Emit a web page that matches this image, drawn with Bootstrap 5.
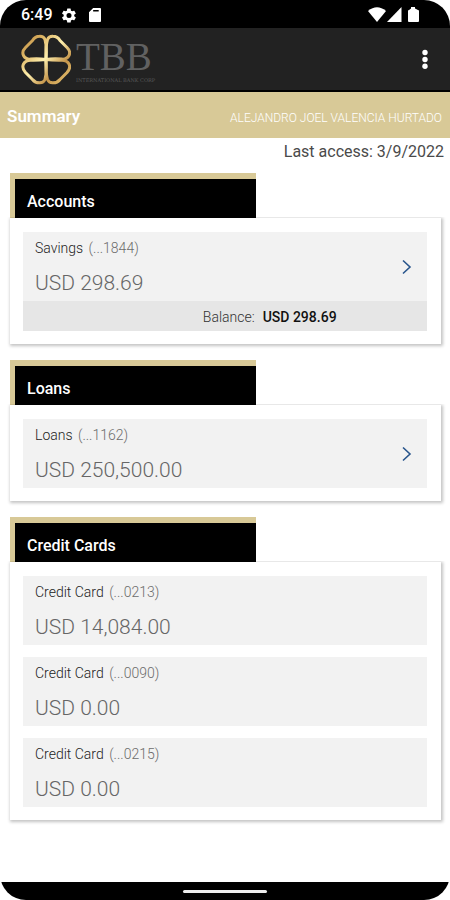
<!DOCTYPE html>
<html lang="en">
<head>
<meta charset="utf-8">
<meta name="viewport" content="width=device-width, initial-scale=1">
<title>TBB – Summary</title>
<link href="https://cdn.jsdelivr.net/npm/bootstrap@5.3.0/dist/css/bootstrap.min.css" rel="stylesheet">
<style>
  body { font-family: Roboto, "Liberation Sans", sans-serif; background: #fff; color: #333; }
  svg { display: block; }
  .phone { border-radius: 26px; }
  .status-bar { height: 28px; padding: 2px 31px 0 21px; font-size: 16px; line-height: 26px; font-weight: 500; }
  .status-bar .left-icons { gap: 9px; }
  .app-bar { height: 64px; background: #222; border-bottom: 2px solid #000; padding: 0 14px 0 21px; }
  .brand-text { padding: 2px 0 0 5px; }
  .brand-name { font: 39px/40px "Liberation Serif", serif; color: #616161; }
  .brand-sub { font: 5px/6px "DejaVu Serif", serif; color: #585858; }
  .title-bar { height: 46px; background: #d8c997; padding: 2px 8px 0 7px; }
  .title-bar h1 { font-size: 17px; line-height: 24px; font-weight: 600; }
  .holder { font-size: 12px; line-height: 20px; padding-top: 4px; font-weight: 300; }
  .last-access { font-size: 16px; line-height: 24px; padding: 2px 6px 0; color: #4a4a4a; }
  main { padding: 9px 9px 16px 10px; gap: 16px; }
  .tab-title { width: 57%; height: 45px; border-top: 6px solid #d8c997; border-left: 5px solid #d8c997;
    background: #000; color: #fff; font-size: 16px; line-height: 20px; font-weight: 500; padding: 13px 12px 0; }
  .panel { background: #fff; padding: 14px 14px 13px 13px; gap: 12px;
    box-shadow: 1px 1px 3px 1px rgba(0,0,0,.24); clip-path: inset(-1px -5px -5px -5px); }
  .product-main { background: #f2f2f2; height: 69px; padding: 6px 13px 0 12px; }
  .product-name { font-size: 14px; line-height: 20px; color: #222; font-weight: 300; }
  .product-name span { color: #6c6c6c; margin-left: 2px; }
  .amount { font-size: 21px; line-height: 28px; margin-top: 11px; color: #666; font-weight: 300; }
  .open-link { margin-bottom: 6px; }
  .balance { background: #e6e6e6; height: 30px; font-size: 14px; line-height: 32px; color: #333; font-weight: 300; }
  .balance strong { color: #111; font-weight: 500; }
  .nav-bar { height: 18px; }
  .home-pill { width: 84px; height: 3px; background: #eee; }
</style>
<script src="https://cdn.jsdelivr.net/npm/bootstrap@5.3.0/dist/js/bootstrap.bundle.min.js" defer></script>
</head>
<body>
<div class="phone min-vh-100 d-flex flex-column overflow-hidden bg-white">

  <div class="status-bar bg-black text-white d-flex justify-content-between">
    <div class="left-icons d-flex align-items-center">
      <span>6:49</span>
      <svg width="14" height="15" viewBox="2 2 20 20" fill="#fff" aria-hidden="true"><path d="M19.4 13a7.500 7.500 0 0 0 0-2l2.100-1.600a.5.5 0 0 0 .1-.6l-2-3.500a.5.5 0 0 0-.6-.2l-2.500 1a7.300 7.300 0 0 0-1.700-1l-.4-2.600a.5.5 0 0 0-.5-.5h-4a.5.5 0 0 0-.5.5L9 5.100a7.700 7.700 0 0 0-1.700 1l-2.500-1a.5.5 0 0 0-.6.2l-2 3.500a.5.5 0 0 0 .1.6L4.500 11a8 8 0 0 0 0 2l-2.200 1.600a.5.5 0 0 0-.1.6l2 3.500c.1.200.4.300.6.200l2.500-1a7.300 7.300 0 0 0 1.700 1l.4 2.600c0 .3.200.5.5.5h4c.3 0 .5-.2.5-.5l.4-2.600a7.700 7.700 0 0 0 1.700-1l2.500 1c.2.100.5 0 .6-.2l2-3.500a.5.5 0 0 0-.1-.6zM12 15.600a3.600 3.600 0 1 1 0-7.200 3.600 3.600 0 0 1 0 7.200z"/></svg>
      <svg class="ms-1" width="12" height="14" viewBox="0 0 13 15" fill="#fff" aria-hidden="true"><path fill-rule="evenodd" d="M4.500 0H12a1 1 0 0 1 1 1v13a1 1 0 0 1-1 1H1a1 1 0 0 1-1-1V4.500zM4.500 2.200v1.600h6V2.200z"/></svg>
    </div>
    <svg class="align-self-center" width="51" height="16" viewBox="0 0 51 16" fill="#fff" aria-hidden="true">
      <path d="M0 4Q9 -3.500 18 4L9 15z"/><path d="M19 15L33.500 0V15z"/>
      <path d="M43 0h4v1.500l3 1.500a1 1 0 0 1 1 1V14a1 1 0 0 1-1 1h-9a1 1 0 0 1-1-1V4a1 1 0 0 1 1-1l2-1.500z"/>
    </svg>
  </div>

  <header class="app-bar d-flex justify-content-between align-items-center">
    <div class="d-flex align-items-center">
      <svg width="50" height="52" viewBox="0 -1 50 51" fill="none" stroke="url(#gold)" stroke-width="3" stroke-linejoin="round" aria-hidden="true">
        <defs><linearGradient id="gold" x1="0" y1="0" x2="50" y2="50" gradientUnits="userSpaceOnUse">
          <stop offset="0" stop-color="#b17a34"/><stop offset=".25" stop-color="#e0b968"/><stop offset=".48" stop-color="#fff0ae"/><stop offset=".72" stop-color="#c4944a"/><stop offset="1" stop-color="#f0cf7c"/>
        </linearGradient></defs>
        <path d="M25 25Q26 12 24 5Q22.500 1.500 18.500 1.700Q14 1.700 11.500 6L4.500 13Q0.500 17 2.500 21Q4.500 25 9.500 24.600Q17 23.900 25 25z"/>
        <path d="M25 25Q24.500 12 26.500 5Q28 1.500 32 1.700Q36.500 1.700 39 6L46 13Q50 17 48 21Q46 25 41 24.600Q32 23.900 25 25z"/>
        <path d="M25 25Q26 38 24 45Q22.500 48.500 18.500 48.300Q14 48.300 11.500 45L4.500 38Q0.500 33.500 2.500 29.500Q4.500 25.700 9.500 25.700Q17 25.900 25 25z"/>
        <path d="M25 25Q24.500 38 26.500 45Q28 48.500 32 48.300Q36.500 48.300 39 45L46 38Q50 33.500 48 29.500Q46 25.700 41 25.700Q32 25.900 25 25z"/>
      </svg>
      <div class="brand-text">
        <div class="brand-name">TBB</div>
        <div class="brand-sub">INTERNATIONAL BANK CORP</div>
      </div>
    </div>
    <button class="btn border-0 p-2" type="button" aria-label="More options">
      <svg width="6" height="20" viewBox="0 0 6 20" fill="#fff"><circle cx="3" cy="3.500" r="2.700"/><circle cx="3" cy="10.500" r="2.700"/><circle cx="3" cy="17.300" r="2.700"/></svg>
    </button>
  </header>

  <div class="title-bar text-white d-flex justify-content-between align-items-center">
    <h1 class="m-0">Summary</h1>
    <span class="holder">ALEJANDRO JOEL VALENCIA HURTADO</span>
  </div>
  <div class="last-access text-end">Last access: 3/9/2022</div>

  <main class="d-flex flex-column">
    <section>
      <h2 class="tab-title m-0">Accounts</h2>
      <div class="panel d-flex flex-column">
        <article>
          <div class="product-main d-flex justify-content-between">
            <div>
              <div class="product-name">Savings <span>(...1844)</span></div>
              <div class="amount">USD 298.69</div>
            </div>
            <a href="#" class="open-link align-self-center" aria-label="Open savings account"><svg width="14" height="16" viewBox="0 0 14 16" fill="none" stroke="#28558c" stroke-width="1.600"><path d="M3 1.500L10 8L3 14.500"/></svg></a>
          </div>
          <div class="balance row g-0">
            <span class="col-7 text-end pe-1">Balance:</span>
            <strong class="col-5 ps-1">USD 298.69</strong>
          </div>
        </article>
      </div>
    </section>

    <section>
      <h2 class="tab-title m-0">Loans</h2>
      <div class="panel d-flex flex-column">
        <article class="product-main d-flex justify-content-between">
          <div>
            <div class="product-name">Loans <span>(...1162)</span></div>
            <div class="amount">USD 250,500.00</div>
          </div>
          <a href="#" class="open-link align-self-center" aria-label="Open loan"><svg width="14" height="16" viewBox="0 0 14 16" fill="none" stroke="#28558c" stroke-width="1.600"><path d="M3 1.500L10 8L3 14.500"/></svg></a>
        </article>
      </div>
    </section>

    <section>
      <h2 class="tab-title m-0">Credit Cards</h2>
      <div class="panel d-flex flex-column">
        <article class="product-main">
          <div class="product-name">Credit Card <span>(...0213)</span></div>
          <div class="amount">USD 14,084.00</div>
        </article>
        <article class="product-main">
          <div class="product-name">Credit Card <span>(...0090)</span></div>
          <div class="amount">USD 0.00</div>
        </article>
        <article class="product-main">
          <div class="product-name">Credit Card <span>(...0215)</span></div>
          <div class="amount">USD 0.00</div>
        </article>
      </div>
    </section>
  </main>

  <div class="nav-bar bg-black mt-auto d-flex justify-content-center align-items-center">
    <div class="home-pill rounded-pill"></div>
  </div>
</div>
</body>
</html>
